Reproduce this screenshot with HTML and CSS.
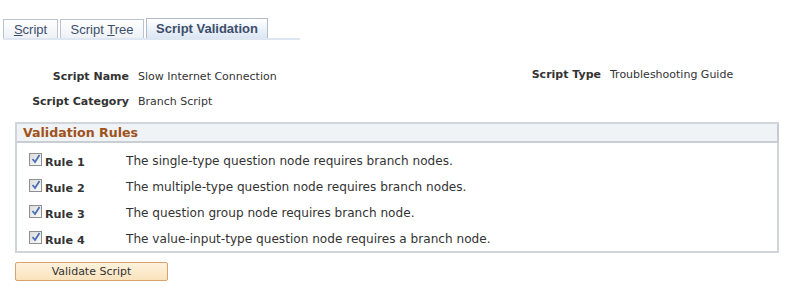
FILE: index.html
```html
<!DOCTYPE html>
<html>
<head>
<meta charset="utf-8">
<link rel="stylesheet" href="styles.css">
</head>
<body>
<div class="tabs">
  <div class="tab"><span class="u">S</span>cript</div>
  <div class="tab tab2">Script <span class="u">T</span>ree</div>
  <div class="tab active">Script Validation</div>
</div>
<div class="fields">
  <div class="lbl">Script Name</div>
  <div class="val">Slow Internet Connection</div>
  <div class="lbl lbl2">Script Type</div>
  <div class="val val2">Troubleshooting Guide</div>
  <div class="lbl">Script Category</div>
  <div class="val">Branch Script</div>
</div>
<div class="box">
  <div class="box-head">Validation Rules</div>
  <div class="rules">
    <div class="rule"><span class="cb"><svg width="10" height="10" viewBox="0 0 10 10"><path d="M1.5 5 L4 8 L8.5 1" fill="none" stroke="#4a6fb5" stroke-width="1.8"/></svg></span><span class="rname">Rule 1</span><span class="rdesc">The single-type question node requires branch nodes.</span></div>
    <div class="rule"><span class="cb"><svg width="10" height="10" viewBox="0 0 10 10"><path d="M1.5 5 L4 8 L8.5 1" fill="none" stroke="#4a6fb5" stroke-width="1.8"/></svg></span><span class="rname">Rule 2</span><span class="rdesc">The multiple-type question node requires branch nodes.</span></div>
    <div class="rule"><span class="cb"><svg width="10" height="10" viewBox="0 0 10 10"><path d="M1.5 5 L4 8 L8.5 1" fill="none" stroke="#4a6fb5" stroke-width="1.8"/></svg></span><span class="rname">Rule 3</span><span class="rdesc">The question group node requires branch node.</span></div>
    <div class="rule"><span class="cb"><svg width="10" height="10" viewBox="0 0 10 10"><path d="M1.5 5 L4 8 L8.5 1" fill="none" stroke="#4a6fb5" stroke-width="1.8"/></svg></span><span class="rname">Rule 4</span><span class="rdesc">The value-input-type question node requires a branch node.</span></div>
  </div>
</div>
<div class="btn-row"><button class="btn">Validate Script</button></div>
</body>
</html>
```
FILE: styles.css
```css
html, body { margin: 0; padding: 0; background: #fff; }
body { font-family: "DejaVu Sans", Verdana, sans-serif; font-size: 11px; color: #333; width: 805px; height: 292px; overflow: hidden; }

.tabs {
  display: flex; align-items: flex-end; gap: 2px;
  margin: 18px 0 0 3px; width: 297px; height: 20px;
  border-bottom: 2px solid #dde6f1;
}
.tab {
  box-sizing: border-box; height: 19px; padding: 2px 0 0 0;
  border: 1px solid #b9c3cf; border-bottom: none;
  background: linear-gradient(#ffffff, #eef1f5);
  font-family: "Liberation Sans", Arial, sans-serif; font-size: 13px; color: #3c4e6b;
  text-align: center; width: 55px;
}
.tab2 { width: 84px; }
.tab.active {
  height: 20px; width: 122px;
  font-weight: bold; color: #3c4e6b;
  background: linear-gradient(#ffffff, #dbe6f3);
  border-color: #b1bccb;
}
.u { text-decoration: underline; }

.fields {
  display: grid;
  grid-template-columns: 129px 375px 79px auto;
  column-gap: 9px; row-gap: 10px;
  margin-top: 29px;
}
.lbl { font-weight: bold; text-align: right; color: #333; line-height: 15px; }
.val { color: #333; line-height: 15px; }
.lbl2, .val2 { position: relative; top: -2px; }

.box {
  margin: 13px 0 0 15px; width: 764px; box-sizing: border-box;
  border: 2px solid #d0d5db;
  height: 131px;
}
.box-head {
  background: #eff3f5; border-bottom: 2px solid #c9ced5; height: 17px;
  border-right: 2px solid #c7cad2; margin-right: -2px;
  padding-left: 6px; font-weight: bold; font-size: 12.6px; line-height: 17px;
  color: #a0521b;
}
.rules { display: flex; flex-direction: column; gap: 10px; padding: 10px 0 0 12px; }
.rule { display: flex; align-items: center; height: 16px; }
.cb {
  box-sizing: border-box; width: 13px; height: 13px; border: 1px solid #8e8f8f;
  background: linear-gradient(135deg, #dcdcdc, #fafafa);
  display: flex; align-items: center; justify-content: center; margin-top: -4px;
}
.rname { font-weight: bold; font-size: 11.2px; width: 81px; margin-left: 3px; color: #333; position: relative; top: 1px; }
.rdesc { color: #333; font-size: 12.1px; }

.btn-row { margin: 9px 0 0 15px; }
.btn {
  width: 153px; height: 19px; box-sizing: border-box;
  border: 1px solid #d7a36b; border-radius: 2px;
  background: linear-gradient(#fdf2dc, #fae3bd);
  font-family: "DejaVu Sans", Verdana, sans-serif; font-size: 11px; color: #333;
  padding: 0;
}
```
